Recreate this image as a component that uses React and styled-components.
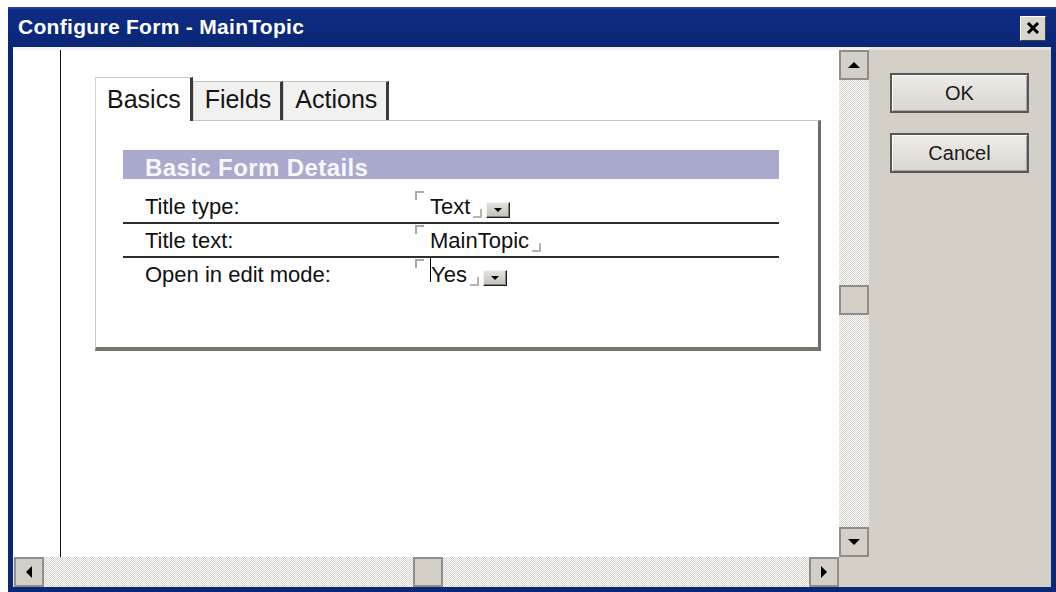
import React from "react";
import styled, { createGlobalStyle } from "styled-components";

const GlobalStyle = createGlobalStyle`
  html, body { margin: 0; padding: 0; background: #fff; }
  body { font-family: "Liberation Sans", Arial, sans-serif; }
`;

const dither = `repeating-conic-gradient(#d4d0c8 0 25%, #ffffff 0 50%) 0 0 / 2px 2px`;

const Window = styled.div`
  margin: 7px 0 0 8px;
  width: 1048px;
  height: 585px;
  display: flex;
  flex-direction: column;
`;

const TitleBar = styled.div`
  height: 40px;
  flex: none;
  display: flex;
  align-items: center;
  justify-content: space-between;
  padding: 0 10px 0 10px;
  background: linear-gradient(#2c4ca2 0px, #0d2c84 3px, #0a2676 100%);
  color: #fff;
  font-weight: bold;
  font-size: 21px;
  letter-spacing: 0.3px;
`;

const CloseButton = styled.div`
  width: 26px;
  height: 25px;
  margin-top: 2px;
  box-sizing: border-box;
  display: flex;
  align-items: center;
  justify-content: center;
  background: #d8d5ce;
  border: 1px solid;
  border-color: #ffffff #404040 #404040 #ffffff;
`;

const Client = styled.div`
  flex: 1;
  display: flex;
  border: 5px solid #0b2878;
  border-top: none;
  background: #d4d0c8;
  box-shadow: inset 1px 0 #6f86c4;
`;

const ScrollView = styled.div`
  width: 856px;
  display: grid;
  grid-template-columns: 826px 30px;
  grid-template-rows: 1fr 30px;
  border-top: 3px solid #f4f3f0;
`;

const Viewport = styled.div`
  background: #fff;
  overflow: hidden;
  display: flex;
  padding-left: 47px;
`;

const Page = styled.div`
  flex: 1;
  border-left: 1px solid #111;
  padding: 27px 0 0 34px;
`;

const TabControl = styled.div`
  width: 726px;
`;

const TabRow = styled.div`
  display: flex;
  align-items: flex-end;
  height: 43px;
`;

const Tab = styled.div`
  position: relative;
  z-index: ${(p) => (p.$active ? 1 : 0)};
  height: ${(p) => (p.$active ? "44px" : "39px")};
  margin-bottom: ${(p) => (p.$active ? "-1px" : "0")};
  box-sizing: border-box;
  display: flex;
  align-items: flex-end;
  padding: 0 9px ${(p) => (p.$active ? "8px" : "7px")} 11px;
  background: ${(p) => (p.$active ? "#fff" : "#f1f1f0")};
  border-top: 1px solid #c6c6c6;
  border-left: 1px solid #d2d2d2;
  border-right: 3px solid #3a3a3a;
  font-size: 25px;
  line-height: 28px;
  color: #151515;
`;

const Panel = styled.div`
  background: #fff;
  border-top: 1px solid #c8c8c8;
  border-left: 1px solid #c8c8c8;
  border-right: 3px solid #6e6e68;
  border-bottom: 4px solid #76766e;
  padding: 29px 39px 57px 27px;
`;

const SectionHeading = styled.div`
  height: 29px;
  box-sizing: border-box;
  padding: 5px 0 0 22px;
  background: #aaaacf;
  color: #f7f7fc;
  font-weight: bold;
  font-size: 24px;
  line-height: 25px;
  letter-spacing: 0.4px;
`;

const FieldRow = styled.div`
  display: grid;
  grid-template-columns: 292px 1fr;
  margin-top: ${(p) => (p.$first ? "11px" : "0")};
  padding: 4px 0 2px;
  border-bottom: ${(p) => (p.$last ? "none" : "2px solid #2e2e2e")};
  font-size: 22px;
  line-height: 26px;
  color: #111;
`;

const Label = styled.div`
  padding-left: 22px;
`;

const Value = styled.div`
  white-space: nowrap;
`;

const MarkOpen = styled.span`
  display: inline-block;
  width: 7px;
  height: 7px;
  border-top: 2px solid #a9a9a9;
  border-left: 2px solid #a9a9a9;
  vertical-align: top;
  margin: -3px 6px 0 0;
`;

const MarkClose = styled.span`
  display: inline-block;
  width: 7px;
  height: 7px;
  border-right: 2px solid #b4b4b4;
  border-bottom: 2px solid #b4b4b4;
  margin: 0 0 -4px 3px;
`;

const Caret = styled.span`
  display: inline-block;
  width: 1px;
  height: 25px;
  background: #000;
  vertical-align: top;
  margin: -5px 0 0 0;
`;

const DropButton = styled.span`
  display: inline-block;
  position: relative;
  width: 24px;
  height: 16px;
  box-sizing: border-box;
  margin: 0 0 -4px 4px;
  background: linear-gradient(#e4e2dc, #c4c0b8);
  border: 1px solid;
  border-color: #f4f4f4 #202020 #202020 #f4f4f4;
  box-shadow: inset -1px -1px #808080;

  &::after {
    content: "";
    position: absolute;
    left: 7px;
    top: 5px;
    border-left: 4px solid transparent;
    border-right: 4px solid transparent;
    border-top: 4px solid #000;
  }
`;

const ScrollTrack = styled.div`
  display: flex;
  flex-direction: ${(p) => (p.$vertical ? "column" : "row")};
  padding-left: ${(p) => (p.$vertical ? "0" : "1px")};
  background: ${dither};
`;

const TrackSpace = styled.div`
  flex: 1;
  display: flex;
  flex-direction: ${(p) => (p.$vertical ? "column" : "row")};
`;

const ScrollBox = styled.div`
  width: 30px;
  height: 30px;
  flex: none;
  box-sizing: border-box;
  display: flex;
  align-items: center;
  justify-content: center;
  background: #d4d0c8;
  border: 2px solid #8f8e8a;
`;

const Arrow = styled.span`
  width: 0;
  height: 0;
  ${(p) =>
    p.$dir === "up"
      ? "border-left: 6px solid transparent; border-right: 6px solid transparent; border-bottom: 6px solid #000;"
      : p.$dir === "down"
      ? "border-left: 6px solid transparent; border-right: 6px solid transparent; border-top: 6px solid #000;"
      : p.$dir === "left"
      ? "border-top: 6px solid transparent; border-bottom: 6px solid transparent; border-right: 6px solid #000;"
      : "border-top: 6px solid transparent; border-bottom: 6px solid transparent; border-left: 6px solid #000;"}
`;

const Corner = styled.div`
  background: #d4d0c8;
`;

const Side = styled.div`
  flex: 1;
  display: flex;
  flex-direction: column;
  gap: 20px;
  padding: 23px 0 0 21px;
  border-top: 3px solid #e6e4df;
`;

const DialogButton = styled.div`
  width: 139px;
  height: 40px;
  box-sizing: border-box;
  display: flex;
  align-items: center;
  justify-content: center;
  background: linear-gradient(#eeece8, #d9d6cf);
  border: 2px solid #585856;
  box-shadow: inset 1px 1px #fff, inset -1px -1px #a8a6a0;
  font-size: 20px;
  color: #1a1a1a;
`;

const ScrollBar = ({ vertical, offset }) => {
  const dirs = vertical ? ["up", "down"] : ["left", "right"];
  return (
    <ScrollTrack $vertical={vertical}>
      <ScrollBox>
        <Arrow $dir={dirs[0]} />
      </ScrollBox>
      <TrackSpace $vertical={vertical}>
        <ScrollBox style={vertical ? { marginTop: offset } : { marginLeft: offset }} />
      </TrackSpace>
      <ScrollBox>
        <Arrow $dir={dirs[1]} />
      </ScrollBox>
    </ScrollTrack>
  );
};

const fields = [
  { label: "Title type:", value: "Text", drop: true },
  { label: "Title text:", value: "MainTopic" },
  { label: "Open in edit mode:", value: "Yes", drop: true, caret: true },
];

export default function App() {
  return (
    <>
      <GlobalStyle />
      <Window>
        <TitleBar>
          <span>Configure Form - MainTopic</span>
          <CloseButton>
            <svg width="14" height="12" viewBox="0 0 14 12">
              <path d="M2 1 L12 11 M12 1 L2 11" stroke="#000" strokeWidth="3" />
            </svg>
          </CloseButton>
        </TitleBar>
        <Client>
          <ScrollView>
            <Viewport>
              <Page>
                <TabControl>
                  <TabRow>
                    <Tab $active>Basics</Tab>
                    <Tab>Fields</Tab>
                    <Tab>Actions</Tab>
                  </TabRow>
                  <Panel>
                    <SectionHeading>Basic Form Details</SectionHeading>
                    {fields.map((f, i) => (
                      <FieldRow key={f.label} $first={i === 0} $last={i === fields.length - 1}>
                        <Label>{f.label}</Label>
                        <Value>
                          <MarkOpen />
                          {f.caret && <Caret />}
                          {f.value}
                          <MarkClose />
                          {f.drop && <DropButton />}
                        </Value>
                      </FieldRow>
                    ))}
                  </Panel>
                </TabControl>
              </Page>
            </Viewport>
            <ScrollBar vertical offset={205} />
            <ScrollBar offset={369} />
            <Corner />
          </ScrollView>
          <Side>
            <DialogButton>OK</DialogButton>
            <DialogButton>Cancel</DialogButton>
          </Side>
        </Client>
      </Window>
    </>
  );
}
